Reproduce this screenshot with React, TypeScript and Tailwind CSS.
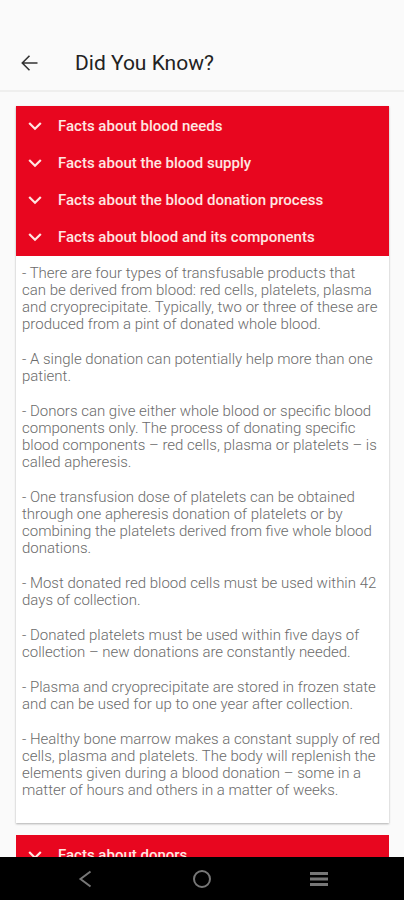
const topics = [
  "Facts about blood needs",
  "Facts about the blood supply",
  "Facts about the blood donation process",
  "Facts about blood and its components",
];

const facts = [
  "- There are four types of transfusable products that can be derived from blood: red cells, platelets, plasma and cryoprecipitate. Typically, two or three of these are produced from a pint of donated whole blood.",
  "- A single donation can potentially help more than one patient.",
  "- Donors can give either whole blood or specific blood components only. The process of donating specific blood components – red cells, plasma or platelets – is called apheresis.",
  "- One transfusion dose of platelets can be obtained through one apheresis donation of platelets or by combining the platelets derived from five whole blood donations.",
  "- Most donated red blood cells must be used within 42 days of collection.",
  "- Donated platelets must be used within five days of collection – new donations are constantly needed.",
  "- Plasma and cryoprecipitate are stored in frozen state and can be used for up to one year after collection.",
  "- Healthy bone marrow makes a constant supply of red cells, plasma and platelets. The body will replenish the elements given during a blood donation – some in a matter of hours and others in a matter of weeks.",
];

function TopicButton({ title, open = false }: { title: string; open?: boolean }) {
  return (
    <button
      type="button"
      aria-expanded={open}
      className="flex w-full items-center gap-4 py-2 pl-3 text-left text-[15px] leading-[21px] font-medium text-[#ffe6e2]"
    >
      <svg viewBox="0 0 14 14" className="size-[14px] shrink-0" fill="none" stroke="currentColor" strokeWidth="2.200" aria-hidden>
        <path d="M1.200 3 7 8.700 12.800 3" />
      </svg>
      {title}
    </button>
  );
}

export default function App() {
  return (
    <div className="flex h-screen flex-col bg-[#fafafa] font-[Roboto,sans-serif]">
      {/* App bar, with room for the status bar above */}
      <header className="flex shrink-0 items-center gap-[35px] border-b-2 border-[#efefee] px-5 pt-11 pb-2">
        <button type="button" aria-label="Back" className="text-[#333]">
          <svg viewBox="0 0 20 20" className="size-5" fill="none" stroke="currentColor" strokeWidth="1.600" aria-hidden>
            <path d="M17.500 10H2.500M9.500 2.800 2.300 10l7.200 7.200" />
          </svg>
        </button>
        <h1 className="text-[21px] leading-[38px] text-[#222]">Did You Know?</h1>
      </header>

      <main className="flex min-h-0 flex-1 flex-col overflow-y-auto pt-[14px] pr-[15px] pl-4 [scrollbar-width:none]">
        <section className="mb-3 bg-white shadow-[0_1px_2px_rgba(0,0,0,0.3)]">
          <div className="bg-[#e8061f] pt-0.5">
            {topics.map((title, i) => (
              <TopicButton key={title} title={title} open={i === topics.length - 1} />
            ))}
          </div>
          <div className="flex flex-col gap-[18px] pt-[9px] pr-[7px] pb-6 pl-[6px] text-[15px] leading-[17px] font-light text-[#6b6b6b]">
            {facts.map((fact) => (
              <p key={fact}>{fact}</p>
            ))}
          </div>
        </section>
        <section className="bg-[#e8061f] pt-0.5">
          <TopicButton title="Facts about donors" />
        </section>
      </main>

      {/* System navigation */}
      <nav className="grid h-[43px] shrink-0 grid-cols-[repeat(3,117px)] justify-center bg-black text-[#777]">
        <button type="button" aria-label="System back" className="grid place-items-center">
          <svg viewBox="0 0 20 20" className="size-5" fill="none" stroke="currentColor" strokeWidth="2" aria-hidden>
            <path d="M15.500 2.500 5.500 10l10 7.500" />
          </svg>
        </button>
        <button type="button" aria-label="Home" className="grid place-items-center">
          <svg viewBox="0 0 20 20" className="size-5" fill="none" stroke="currentColor" strokeWidth="2" aria-hidden>
            <circle cx="10" cy="10" r="8" />
          </svg>
        </button>
        <button type="button" aria-label="Recent apps" className="grid place-items-center">
          <svg viewBox="0 0 20 20" className="size-5" fill="none" stroke="currentColor" strokeWidth="2.800" aria-hidden>
            <path d="M1 4.500h18M1 10h18M1 15.500h18" />
          </svg>
        </button>
      </nav>
    </div>
  );
}
